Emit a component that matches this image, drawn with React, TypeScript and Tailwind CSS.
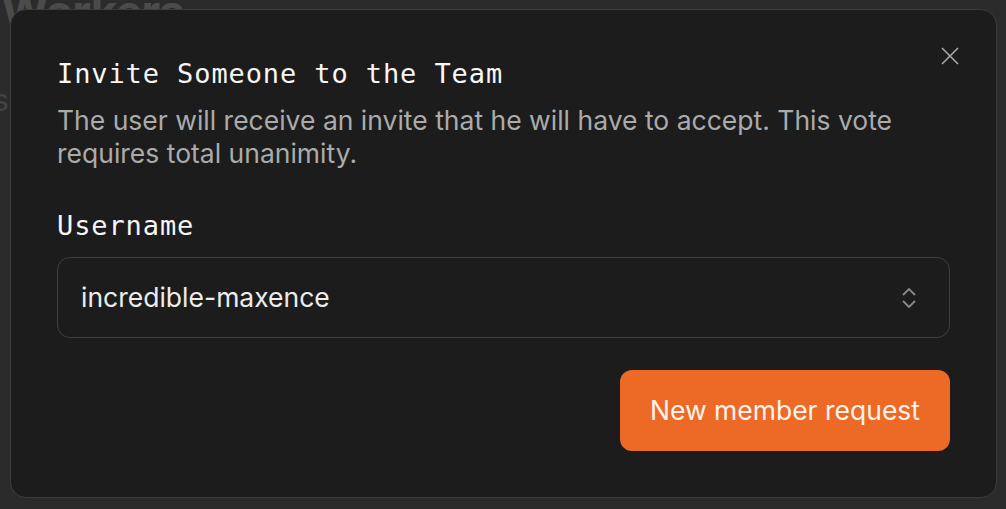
const mono = { fontFamily: "'DejaVu Sans Mono', 'Liberation Mono', monospace" };

export default function App() {
  return (
    <div className="relative w-[1006px] h-[509px] overflow-hidden bg-[#2b2b2b]" style={{ fontFamily: "Inter, 'Noto Sans', sans-serif" }}>
      {/* page behind the dialog */}
      <div className="flex flex-col -mt-[16px] pl-[1px]">
        <div className="flex items-end">
          <span className="text-[46px] font-bold text-[#4b4b4b] leading-[54px] tracking-tight">Workers</span>
          <div className="ml-auto mr-[37px] flex gap-[24px] h-[26px]">
            <div className="w-px bg-[#3a3a3a]" />
            <div className="w-px bg-[#3a3a3a]" />
          </div>
        </div>
        <span className="mt-[44px] -ml-[8px] text-[30px] leading-[36px] text-[#444]">s</span>
      </div>

      {/* dialog overlay */}
      <div className="absolute left-[10px] top-[9px] w-[987px] h-[489px] rounded-[16px] border border-[#3c3c3c] bg-[#1c1c1c] px-[46px] pt-[44px] pb-[46px] flex flex-col">
        <button className="absolute right-[36px] top-[36px] w-[20px] h-[20px] flex items-center justify-center text-[#a9a9a9]">
          <svg width="18" height="18" viewBox="0 0 18 18" fill="none" stroke="currentColor" strokeWidth="1.6">
            <path d="M1 1 L17 17 M17 1 L1 17" />
          </svg>
        </button>

        <h2 className="text-[27px] leading-[40px] text-[#f7f7f7] tracking-[0.9px]" style={mono}>
          Invite Someone to the Team
        </h2>
        <p className="mt-[10px] text-[26.5px] leading-[33px] text-[#ababab]">
          The user will receive an invite that he will have to accept. This vote requires total unanimity.
        </p>

        <label className="mt-[36px] text-[27px] leading-[40px] text-[#f7f7f7] tracking-[0.9px]" style={mono}>
          Username
        </label>

        <div className="mt-[11px] h-[82px] rounded-[13px] border border-[#3e3e3e] flex items-center justify-between pl-[23px] pr-[32px]">
          <span className="text-[26.5px] text-[#ececec]">incredible-maxence</span>
          <svg width="16" height="24" viewBox="0 0 16 24" fill="none" stroke="#8a8a8a" strokeWidth="1.8">
            <path d="M2 9 L8 3 L14 9" />
            <path d="M2 15 L8 21 L14 15" />
          </svg>
        </div>

        <div className="mt-[32px] flex justify-end">
          <button className="w-[330px] h-[81px] rounded-[12px] bg-[#ec6a26] text-[26.5px] text-[#fdf3ec]">
            New member request
          </button>
        </div>
      </div>
    </div>
  );
}
